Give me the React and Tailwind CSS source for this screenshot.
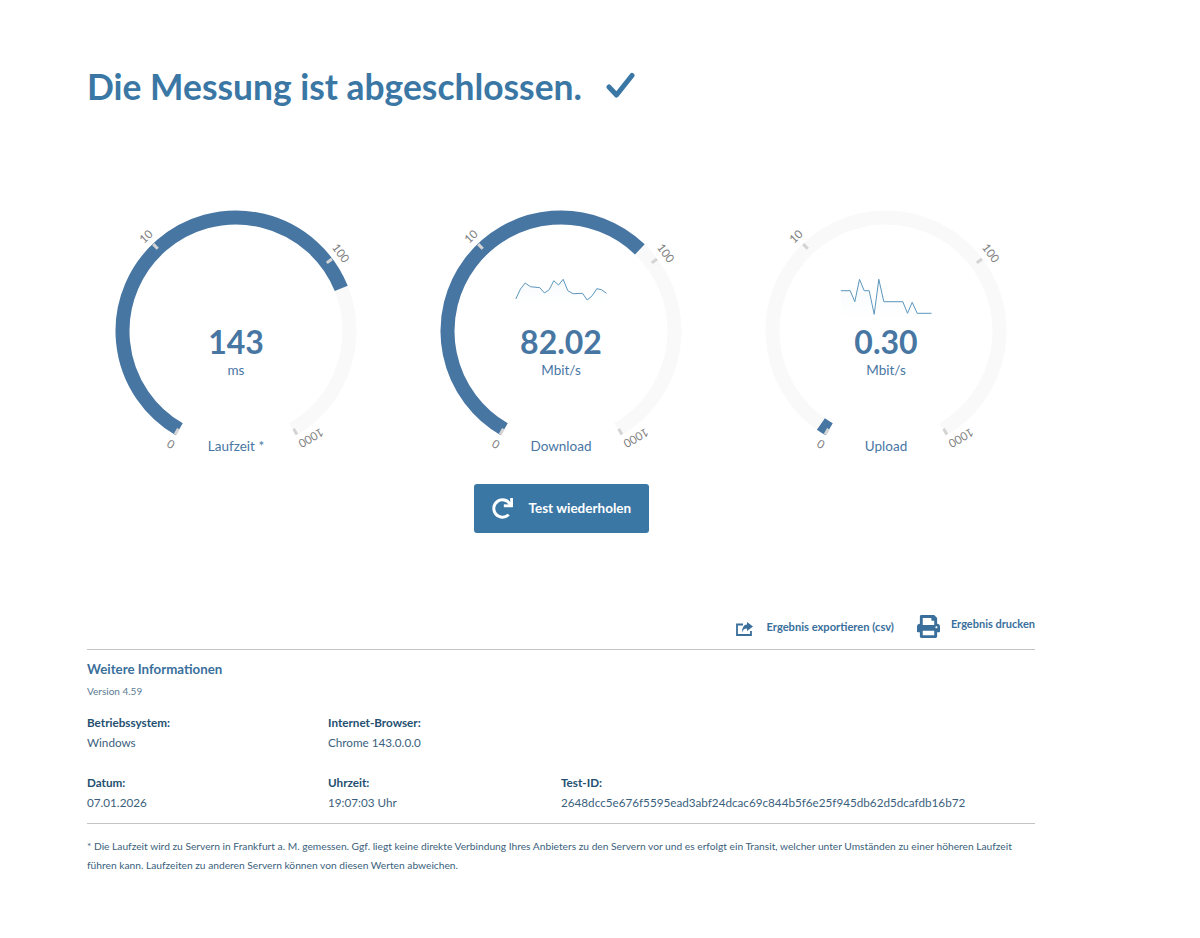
import React from "react";
import { FaRedo, FaPrint } from "react-icons/fa";

const CX = 162, CY = 126, R = 113.5;
const pt = (deg, r = R) => {
  const a = (deg * Math.PI) / 180;
  return [CX + r * Math.sin(a), CY - r * Math.cos(a)];
};
const arc = (a, b) => {
  const [x1, y1] = pt(a);
  const [x2, y2] = pt(b);
  return `M${x1} ${y1}A${R} ${R} 0 ${b - a > 180 ? 1 : 0} 1 ${x2} ${y2}`;
};
// tick angle, label, label position angle, label rotation
const TICKS = [
  [-149.5, "0", -150, -150],
  [-43.6, "10", -43.6, -43.6],
  [53.1, "100", 53.4, 53.1],
  [149.5, "1000", 145, 150],
];

function Gauge({ end, value, unit, label, spark, sparkId }) {
  const line = spark && spark[0].map((p) => p.join(",")).join(" ");
  return (
    <div className="relative h-[255px] flex flex-col items-center">
      <svg width="325" height="255" viewBox="0 0 325 255" className="absolute left-0 top-0">
        <path d={arc(-150, 150)} fill="none" stroke="#f9f9f9" strokeWidth="14" />
        <path d={arc(-150, end)} fill="none" stroke="#4776a3" strokeWidth="14" />
        {TICKS.map(([deg, t, pos, rot]) => {
          const [x1, y1] = pt(deg, 113.5);
          const [x2, y2] = pt(deg, 120);
          const [lx, ly] = pt(pos, 131);
          return (
            <g key={t}>
              <line x1={x1} y1={y1} x2={x2} y2={y2} stroke="#d4d4d4" strokeWidth="3" />
              <text
                x={lx}
                y={ly}
                transform={`rotate(${rot} ${lx} ${ly})`}
                textAnchor="middle"
                dominantBaseline="central"
                fontSize="11.5"
                fill="#808080"
                fontFamily="Lato, sans-serif"
              >
                {t}
              </text>
            </g>
          );
        })}
        {spark && (
          <>
            <defs>
              <linearGradient id={sparkId} x1="0" y1="0" x2="0" y2="1">
                <stop offset="0" stopColor="#3a77a5" stopOpacity="0.04" />
                <stop offset="1" stopColor="#3a77a5" stopOpacity="0" />
              </linearGradient>
            </defs>
            <polygon
              points={`${spark[0][0][0]},${spark[1]} ${line} ${spark[0][spark[0].length - 1][0]},${spark[1]}`}
              fill={`url(#${sparkId})`}
            />
            <polyline points={line} fill="none" stroke="#5b97bd" strokeWidth="1" />
          </>
        )}
      </svg>
      <div className="relative mt-[110px] text-[32px] leading-[54px] font-bold text-[#4776a3]">{value}</div>
      <div className="relative -mt-[9px] text-[13.5px] leading-[20px] text-[#4776a3]">{unit}</div>
      <div className="relative mt-[56px] text-[13.5px] leading-[20px] text-[#4776a3]">{label}</div>
    </div>
  );
}

const sp = (pts, ox, oy) => pts.map(([x, y]) => [+(ox + x / 3).toFixed(1), +(oy + y / 3).toFixed(1)]);
const dl = sp(
  [[16,72],[30,42],[44,24],[60,35],[88,38],[102,54],[116,44],[130,17],[144,30],[158,13],[172,47],[188,56],[216,55],[230,75],[245,62],[259,41],[273,44],[288,55]],
  510 - 398.5,
  275 - 205
);
const ul = sp(
  [[16,47],[44,47],[58,80],[72,13],[86,47],[101,47],[116,118],[130,13],[145,80],[202,80],[216,115],[230,82],[245,115],[288,115]],
  835 - 723.5,
  275 - 205
);

function Info({ label, value, className = "" }) {
  return (
    <div className={className}>
      <div className="text-[11.7px] leading-[20px] font-bold text-[#244f70]">{label}</div>
      <div className="text-[11.7px] leading-[20px] text-[#3b5f7d]">{value}</div>
    </div>
  );
}

export default function App() {
  return (
    <div className="w-[1200px] h-[938px] bg-white overflow-hidden font-['Lato',sans-serif]">
      <div className="ml-[87px] w-[948px] pt-[64px]">
        <div className="flex items-center h-[46px]">
          <h1 className="text-[35.4px] leading-[46px] font-bold text-[#3a77a5] whitespace-nowrap">Die Messung ist abgeschlossen.</h1>
          <svg width="30" height="28" viewBox="0 0 30 28" className="ml-[24px] -mt-[3px]" fill="none">
            <polyline points="3,15 10.5,23 26,3.5" stroke="#3a77a5" strokeWidth="5" strokeLinecap="round" strokeLinejoin="round" />
          </svg>
        </div>

        <div className="-ml-[13.5px] w-[975px] grid grid-cols-3 mt-[95px]">
          <Gauge end={68} value="143" unit="ms" label="Laufzeit *" />
          <Gauge end={44} value="82.02" unit="Mbit/s" label="Download" spark={[dl, 100]} sparkId="sd" />
          <Gauge end={-145} value="0.30" unit="Mbit/s" label="Upload" spark={[ul, 115]} sparkId="su" />
        </div>

        <div className="flex justify-center mt-[24px]">
          <button className="w-[175px] h-[49px] rounded-[3px] bg-[#3a77a5] text-white flex items-center pl-[18px]">
            <FaRedo className="w-[21px] h-[21px]" />
            <span className="ml-[16px] text-[13.5px] font-bold">Test wiederholen</span>
          </button>
        </div>

        <div className="flex justify-end items-start mt-[79px] h-[37px] text-[#3a6f9c]">
          <svg width="17" height="14" viewBox="0 0 17 14" className="mt-[10px]" fill="none">
            <path d="M7 2.5H1V13H15V9" stroke="currentColor" strokeWidth="1.8" />
            <path d="M11 0L17 4.5L11 9V6.5C8 6.5 7 8 6 10.5C6 6 8 2.5 11 2.5Z" fill="currentColor" />
          </svg>
          <span className="ml-[14px] mt-[7px] text-[11.15px] leading-[16px] font-bold">Ergebnis exportieren (csv)</span>
          <FaPrint className="ml-[23px] mt-[3px] w-[23px] h-[23px]" />
          <span className="ml-[11px] mt-[4px] text-[11px] leading-[16px] font-bold">Ergebnis drucken</span>
        </div>

        <div className="border-t border-[#c4c4c4] pt-[9px]">
          <h2 className="text-[13.3px] leading-[20px] font-bold text-[#3a6f9c]">Weitere Informationen</h2>
          <p className="mt-[3px] text-[10px] leading-[18px] text-[#5b7a93]">Version 4.59</p>
          <div className="grid grid-cols-[241px_233px_1fr] mt-[12px] gap-y-[20px]">
            <Info label="Betriebssystem:" value="Windows" />
            <Info label="Internet-Browser:" value="Chrome 143.0.0.0" className="col-span-2" />
            <Info label="Datum:" value="07.01.2026" />
            <Info label="Uhrzeit:" value="19:07:03 Uhr" />
            <Info label="Test-ID:" value="2648dcc5e676f5595ead3abf24dcac69c844b5f6e25f945db62d5dcafdb16b72" />
          </div>
        </div>

        <div className="mt-[11px] border-t border-[#c4c4c4] pt-[13px] text-[10.23px] leading-[19px] text-[#3b5f7d]">
          * Die Laufzeit wird zu Servern in Frankfurt a. M. gemessen. Ggf. liegt keine direkte Verbindung Ihres Anbieters zu den Servern vor und es erfolgt ein Transit, welcher unter Umständen zu einer höheren Laufzeit führen kann. Laufzeiten zu anderen Servern können von diesen Werten abweichen.
        </div>
      </div>
    </div>
  );
}
